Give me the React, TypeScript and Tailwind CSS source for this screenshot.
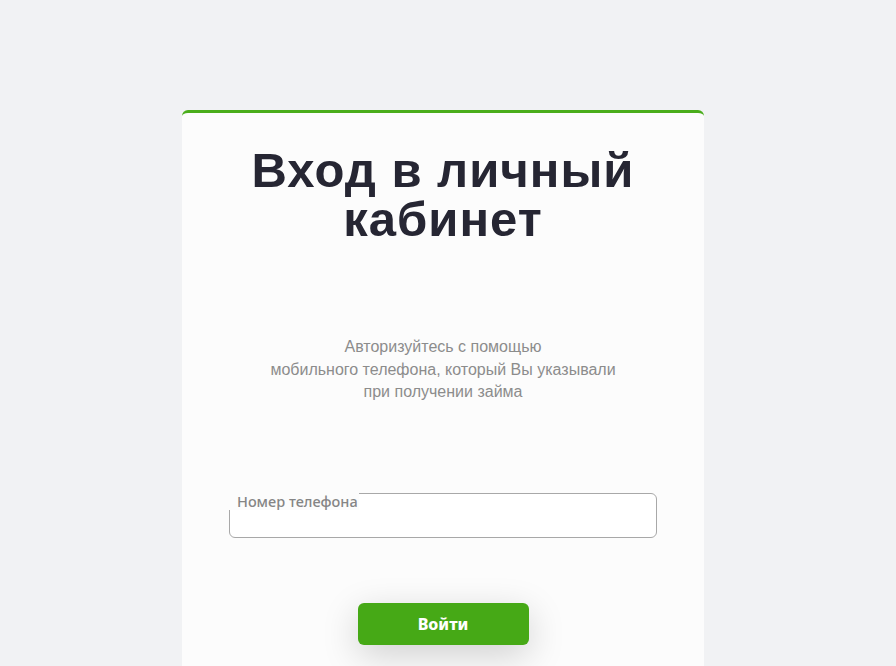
import React from 'react';

const App: React.FC = () => {
  return (
    <div className="min-h-screen bg-[#f1f2f4] pr-[10px] pt-[110px] overflow-hidden">
      <div className="mx-auto w-[522px] h-[600px] bg-[#fcfcfc] border-t-[3px] border-[#4aad1b] rounded-t-[6px]">
        <h1
          className="pt-[33px] px-[30px] text-center text-[49px] leading-[49px] tracking-[1px] font-bold text-[#262633]"
          style={{ fontFamily: '"Liberation Sans", Arial, sans-serif' }}
        >
          Вход в личный кабинет
        </h1>

        <p
          className="mt-[92px] text-center text-[16px] leading-[22.5px] text-[#8c8c8c]"
          style={{ fontFamily: '"Liberation Sans", Arial, sans-serif' }}
        >
          Авторизуйтесь с помощью
          <br />
          мобильного телефона, который Вы указывали
          <br />
          при получении займа
        </p>

        <div className="mt-[89px] mx-[47px] relative h-[45px] border border-[#a8a8a8] rounded-[6px] bg-white">
          <span
            className="absolute -top-px -left-px h-[17px] pl-[8px] pr-[1px] bg-[#fcfcfc] text-[14.5px] leading-[16px] font-medium text-[#858585]"
            style={{ fontFamily: '"Noto Sans", "Open Sans", sans-serif' }}
          >
            Номер телефона
          </span>
        </div>

        <div className="mt-[65px] flex justify-center">
          <button
            className="w-[171px] h-[42px] rounded-[6px] bg-[#46a916] text-white text-[16px] font-extrabold shadow-[0_10px_36px_rgba(0,0,0,0.18)]"
            style={{ fontFamily: '"Noto Sans", "Open Sans", sans-serif' }}
          >
            Войти
          </button>
        </div>
      </div>
    </div>
  );
};

export default App;
